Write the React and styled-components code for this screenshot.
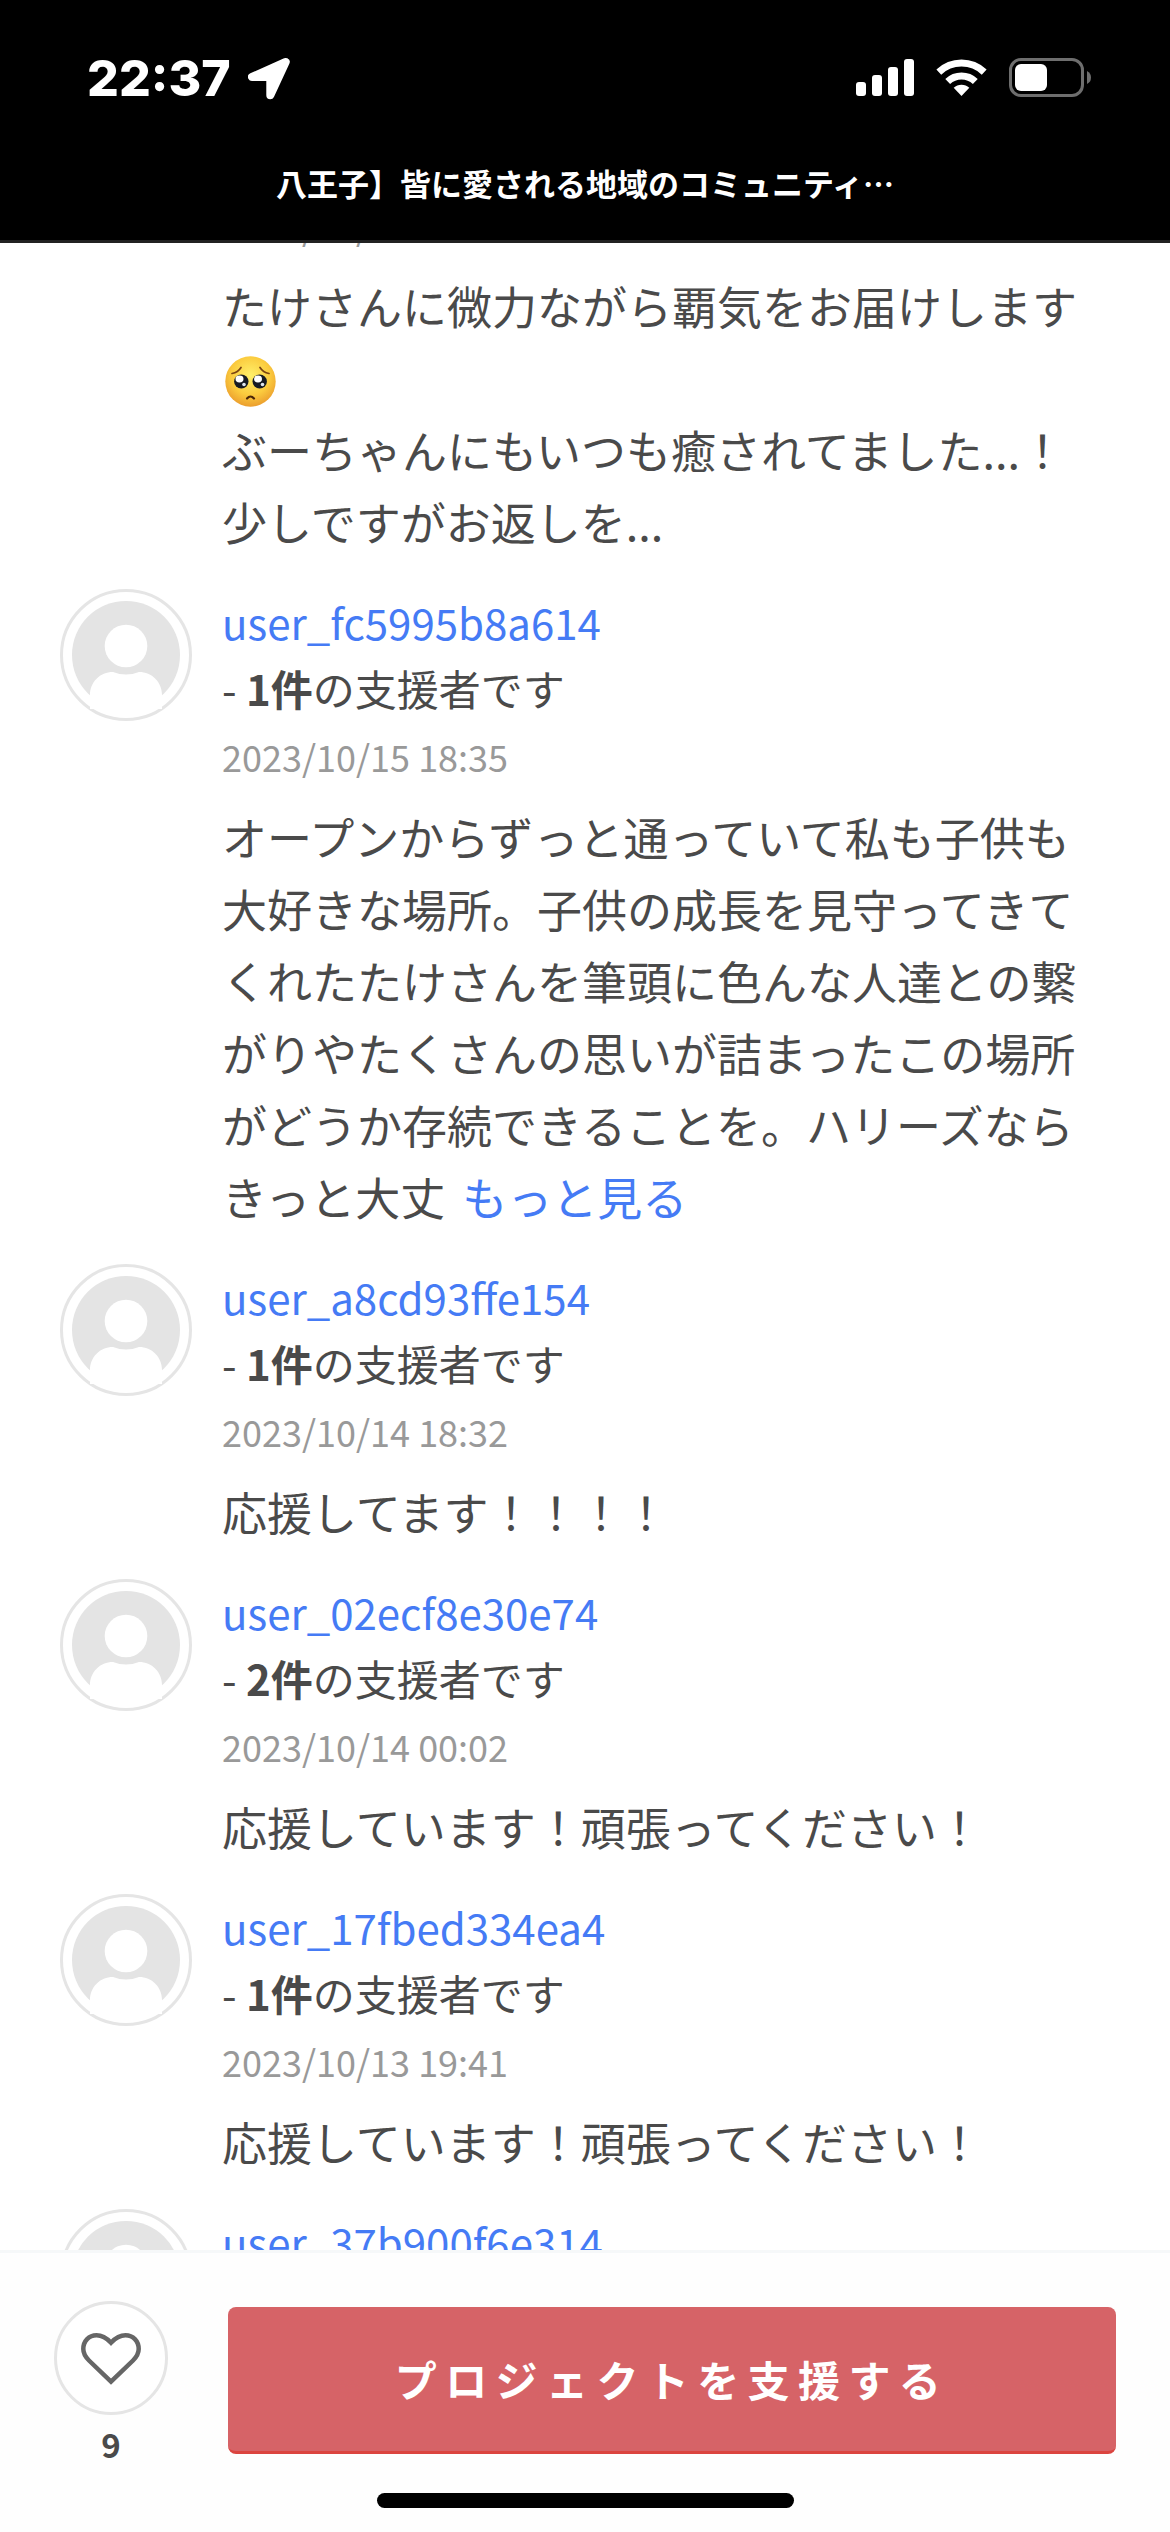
import React from "react";
import styled, { createGlobalStyle } from "styled-components";

const Global = createGlobalStyle`
  *, *::before, *::after { box-sizing: border-box; }
  body { margin: 0; background: #fff; }
`;

const jp = `"Noto Sans CJK JP", "Noto Sans", sans-serif`;

const Screen = styled.div`
  width: 1170px;
  height: 2532px;
  display: flex;
  flex-direction: column;
  overflow: hidden;
  background: #fff;
  color: #4a4a4a;
  font-family: ${jp};
`;

const Header = styled.header`
  flex: none;
  height: 243px;
  background: #000;
  border-bottom: 3px solid #222;
  color: #fff;
`;

const StatusBar = styled.div`
  height: 155px;
  padding: 0 79px 0 87px;
  display: flex;
  align-items: center;
  justify-content: space-between;
`;

const Clock = styled.div`
  display: flex;
  align-items: center;
  font: 800 50px/60px Inter, sans-serif;
`;

const Time = styled.span`
  width: 161px;
  white-space: nowrap;
`;

const Indicators = styled.div`
  display: flex;
  align-items: center;
  gap: 22px;
`;

const Title = styled.h1`
  margin: 0;
  padding-top: 3px;
  text-align: center;
  font-size: 31px;
  line-height: 50px;
  font-weight: 700;
`;

const Feed = styled.main`
  flex: 1;
  min-height: 0;
  overflow: hidden;
`;

const Entry = styled.article`
  display: flex;
  gap: 30px;
  padding: 0 90px 31px 60px;
  margin-top: ${(p) => (p.$scrolled ? "-53px" : "0")};
`;

const AvatarRing = styled.div`
  flex: none;
  width: 132px;
  height: 132px;
  border: 3px solid ${(p) => (p.$hidden ? "transparent" : "#e5e5e5")};
  border-radius: 50%;
  display: flex;
  align-items: center;
  justify-content: center;
`;

const Content = styled.div`
  flex: 1;
  min-width: 0;
`;

const UserName = styled.a`
  display: block;
  font-size: 42px;
  line-height: 66px;
  color: #457bf5;
`;

const Supports = styled.div`
  font-size: 42px;
  line-height: 66px;
`;

const DateLine = styled.div`
  margin-top: 2px;
  font-size: 36px;
  line-height: 66px;
  color: #999;
`;

const Message = styled.p`
  margin: 12px 0 0;
  font-size: 45px;
  line-height: 72px;
  white-space: nowrap;
`;

const Line = styled.span`
  display: block;
  height: 72px;
`;

const More = styled.a`
  margin-left: 7px;
  color: #457bf5;
`;

const Footer = styled.footer`
  flex: none;
  height: 282px;
  border-top: 3px solid #f6f8f9;
  background: #fefefe;
  display: flex;
  flex-direction: column;
  align-items: center;
`;

const Actions = styled.div`
  width: 100%;
  height: 240px;
  padding: 48px 54px 0;
  display: flex;
  align-items: flex-start;
  justify-content: space-between;
`;

const Like = styled.div`
  width: 114px;
  display: flex;
  flex-direction: column;
  align-items: center;
`;

const LikeButton = styled.button`
  width: 114px;
  height: 114px;
  padding: 2px 0 0;
  border: 3px solid #e5e5e5;
  border-radius: 50%;
  background: #fff;
  display: flex;
  align-items: center;
  justify-content: center;
`;

const LikeCount = styled.span`
  margin-top: 4px;
  font-size: 33px;
  line-height: 50px;
  font-weight: 700;
`;

const SupportButton = styled.button`
  width: 888px;
  height: 147px;
  margin-top: 6px;
  padding: 0 0 2px;
  border: 0;
  border-bottom: 3px solid #db443f;
  border-radius: 8px;
  background: #d66367;
  color: #fff;
  font-family: ${jp};
  font-size: 42px;
  font-weight: 700;
  letter-spacing: 0.2em;
`;

const HomeIndicator = styled.div`
  width: 417px;
  height: 15px;
  border-radius: 8px;
  background: #000;
`;

const LocationArrow = () => (
  <svg width="42" height="44" viewBox="0 -2 42 44" fill="#fff" stroke="#fff" strokeWidth="8" strokeLinejoin="round">
    <path d="M37.700 4 L4 19 L22.300 19 L22.300 37.300 Z" />
  </svg>
);

const Signal = () => (
  <svg width="58" height="37" viewBox="0 0 58 37" fill="#fff">
    <rect x="0" y="23" width="10" height="14" rx="3" />
    <rect x="16" y="16" width="10" height="21" rx="3" />
    <rect x="32" y="8" width="10" height="29" rx="3" />
    <rect x="48" y="0" width="10" height="37" rx="3" />
  </svg>
);

const Wifi = () => (
  <svg width="51" height="37" viewBox="0 0 51 37" fill="none" stroke="#fff" strokeWidth="7">
    <path d="M2.800 13.100 A33 33 0 0 1 48.200 13.100" />
    <path d="M11.700 22.500 A20 20 0 0 1 39.300 22.500" />
    <path d="M17.700 28.800 A11.300 11.300 0 0 1 33.300 28.800 L25.500 37 Z" fill="#fff" stroke="none" />
  </svg>
);

const Battery = () => (
  <svg width="82" height="39" viewBox="0 0 82 39" fill="none">
    <rect x="1.500" y="1.500" width="72" height="36" rx="10.500" stroke="#6e6e6e" strokeWidth="3" />
    <rect x="6" y="6" width="32" height="27" rx="6" fill="#fff" />
    <path d="M78 13 Q82 15 82 19.500 Q82 24 78 26 Z" fill="#6e6e6e" />
  </svg>
);

const Person = () => (
  <svg width="108" height="108" viewBox="0 0 108 108">
    <circle cx="54" cy="54" r="54" fill="#e4e4e4" />
    <circle cx="54" cy="45" r="21.300" fill="#fff" />
    <path d="M18 110 V94 C18 81 28 71 41 71 Q54 76 67 71 C80 71 90 81 90 94 V110 Z" fill="#fff" />
  </svg>
);

const Heart = () => (
  <svg width="60" height="52" viewBox="0 0 60 52" fill="none" stroke="#666" strokeWidth="4.500">
    <path d="M30 48.700 L8 27.500 C4.500 24 2.300 20.500 2.300 16 C2.300 8 8 2.300 15.500 2.300 C22 2.300 26 5.500 30 9.700 C34 5.500 38 2.300 44.500 2.300 C52 2.300 57.700 8 57.700 16 C57.700 20.500 55.500 24 52 27.500 Z" />
  </svg>
);

const PleadingSvg = styled.svg`
  display: block;
  margin-left: 3px;
`;

const EmojiLine = styled.span`
  display: block;
  height: 72px;
  padding-top: 14px;
`;

const Pleading = () => (
  <PleadingSvg width="51" height="51" viewBox="0 0 51 51" fill="none">
    <defs>
      <radialGradient id="face" cx="50%" cy="38%" r="64%">
        <stop offset="0" stopColor="#fff06a" />
        <stop offset="0.600" stopColor="#fbcb3e" />
        <stop offset="1" stopColor="#ea9a2c" />
      </radialGradient>
    </defs>
    <circle cx="25.500" cy="25.500" r="25.200" fill="url(#face)" />
    <path d="M7 17.500 Q13 16.500 16 11.500 M44 17.500 Q38 16.500 35 11.500" stroke="#7a4413" strokeWidth="1.700" strokeLinecap="round" />
    <ellipse cx="16.300" cy="25.500" rx="7.200" ry="7" fill="#171b24" />
    <ellipse cx="34.700" cy="25.500" rx="7.200" ry="7" fill="#171b24" />
    <ellipse cx="14.500" cy="23" rx="4" ry="3.400" fill="#fff" />
    <ellipse cx="33" cy="23" rx="4" ry="3.400" fill="#fff" />
    <circle cx="19" cy="28.500" r="1.800" fill="#dfe6f0" />
    <circle cx="37.500" cy="28.500" r="1.800" fill="#dfe6f0" />
    <path d="M22 42.500 Q25.500 38.500 29 42.500" stroke="#4a2608" strokeWidth="2.200" strokeLinecap="round" />
  </PleadingSvg>
);

const entries = [
  {
    user: "user_fc5995b8a614",
    count: 1,
    date: "2023/10/15 18:35",
    lines: [
      "オープンからずっと通っていて私も子供も",
      "大好きな場所。子供の成長を見守ってきて",
      "くれたたけさんを筆頭に色んな人達との繋",
      "がりやたくさんの思いが詰まったこの場所",
      "がどうか存続できることを。ハリーズなら",
      "きっと大丈",
    ],
    more: true,
  },
  { user: "user_a8cd93ffe154", count: 1, date: "2023/10/14 18:32", lines: ["応援してます！！！！"] },
  { user: "user_02ecf8e30e74", count: 2, date: "2023/10/14 00:02", lines: ["応援しています！頑張ってください！"] },
  { user: "user_17fbed334ea4", count: 1, date: "2023/10/13 19:41", lines: ["応援しています！頑張ってください！"] },
  { user: "user_37b900f6e314", lines: [] },
];

const Supporter = ({ user, count, date, lines, more }) => (
  <Entry>
    <AvatarRing>
      <Person />
    </AvatarRing>
    <Content>
      <UserName>{user}</UserName>
      {count && (
        <Supports>
          - <b>{count}件</b>の支援者です
        </Supports>
      )}
      {date && <DateLine>{date}</DateLine>}
      {lines.length > 0 && (
        <Message>
          {lines.map((text, i) => (
            <Line key={text}>
              {text}
              {more && i === lines.length - 1 && <> <More>もっと見る</More></>}
            </Line>
          ))}
        </Message>
      )}
    </Content>
  </Entry>
);

export default function App() {
  return (
    <Screen>
      <Global />
      <Header>
        <StatusBar>
          <Clock>
            <Time>22:37</Time>
            <LocationArrow />
          </Clock>
          <Indicators>
            <Signal />
            <Wifi />
            <Battery />
          </Indicators>
        </StatusBar>
        <Title>八王子】皆に愛される地域のコミュニティ…</Title>
      </Header>
      <Feed>
        <Entry $scrolled>
          <AvatarRing $hidden />
          <Content>
            <DateLine>2023/10/15</DateLine>
            <Message>
              <Line>たけさんに微力ながら覇気をお届けします</Line>
              <EmojiLine>
                <Pleading />
              </EmojiLine>
              <Line>ぶーちゃんにもいつも癒されてました...！</Line>
              <Line>少しですがお返しを...</Line>
            </Message>
          </Content>
        </Entry>
        {entries.map((entry) => (
          <Supporter key={entry.user} {...entry} />
        ))}
      </Feed>
      <Footer>
        <Actions>
          <Like>
            <LikeButton aria-label="like">
              <Heart />
            </LikeButton>
            <LikeCount>9</LikeCount>
          </Like>
          <SupportButton>プロジェクトを支援する</SupportButton>
        </Actions>
        <HomeIndicator />
      </Footer>
    </Screen>
  );
}
